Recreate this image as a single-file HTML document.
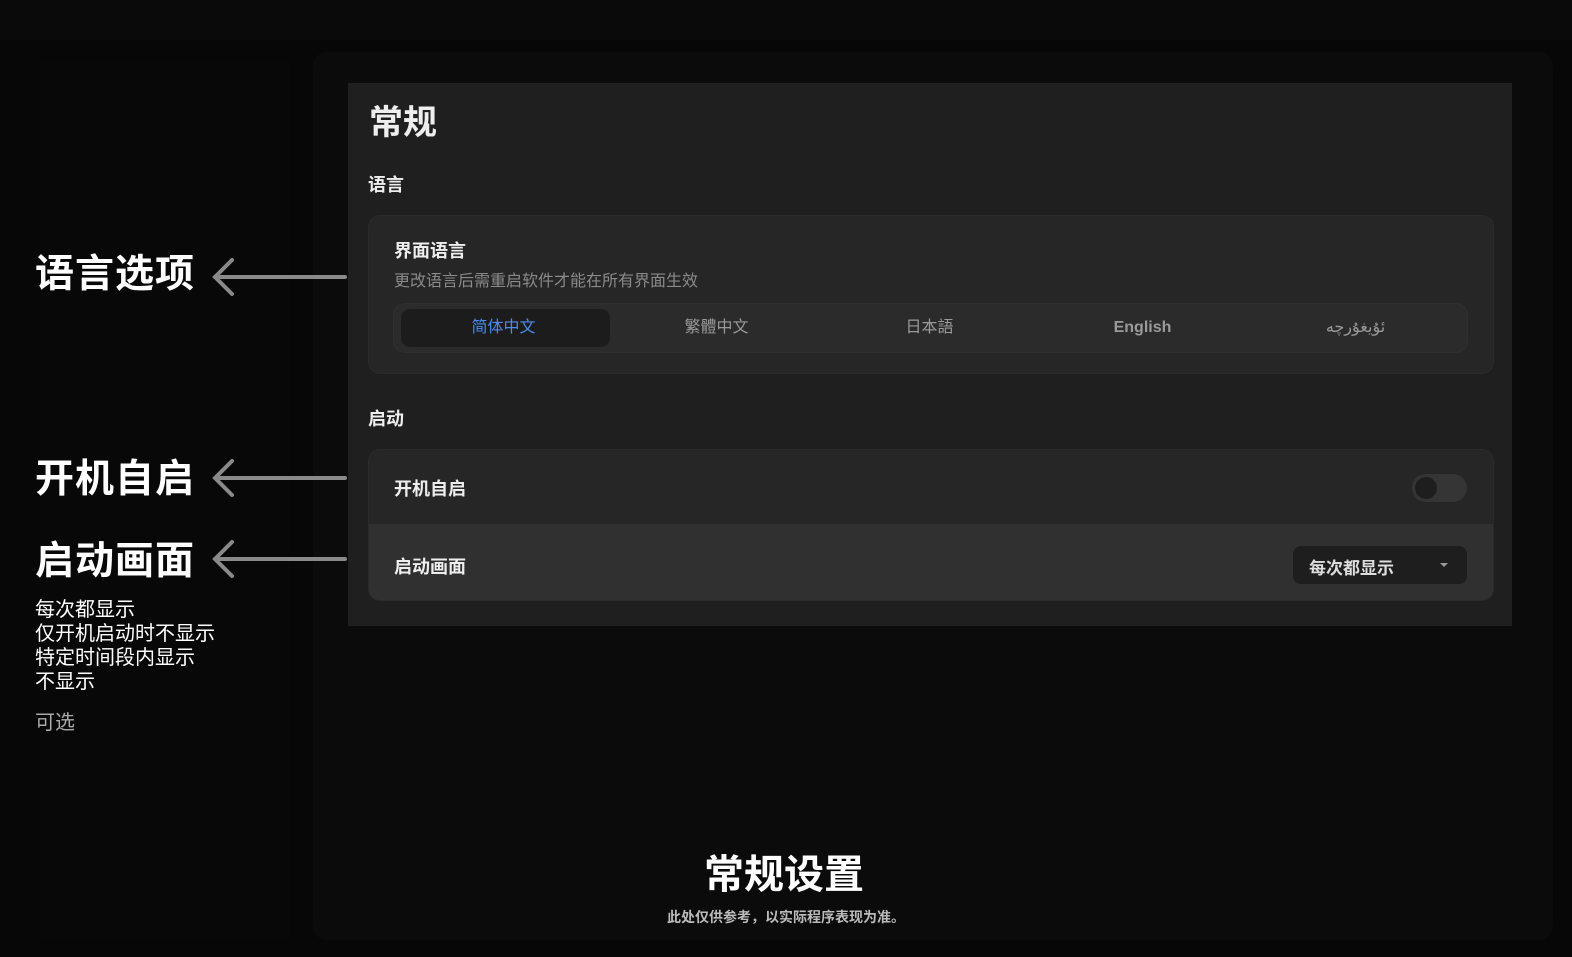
<!DOCTYPE html>
<html><head><meta charset="utf-8"><style>
*{margin:0;padding:0;box-sizing:border-box}
body{width:1572px;height:957px;background:#070707;font-family:"Liberation Sans","Noto Sans CJK SC",sans-serif;position:relative;overflow:hidden;color:#eee}
.abs{position:absolute}
.top{left:0;top:0;width:1572px;height:40px;background:#0a0a0a}
.side{left:40px;top:60px;width:250px;height:880px;background:#080808}
.outer{left:313px;top:52px;width:1240px;height:888px;background:#0b0b0b;border-radius:14px}
.panel{left:348px;top:83px;width:1164px;height:543px;background:#1f1f1f}
.card{background:#262626;border-radius:12px;border:1px solid #2a2a2a}
.ann{color:#fff;font-weight:bold;font-size:39px;left:35px;letter-spacing:1px}
.opts{left:35px;top:598px;font-size:20px;line-height:24px;color:#fff}
.seg{position:absolute;top:0;height:48px;line-height:48px;text-align:center;font-size:16px;color:#9a9a9a;width:213px}
</style></head><body>
<div class="abs top"></div>
<div class="abs side"></div>
<div class="abs outer"></div>
<div class="abs panel">
  <div class="abs" style="left:21px;top:12px;font-size:34px;font-weight:bold;color:#eee">常规</div>
  <div class="abs" style="left:20px;top:88px;font-size:18px;font-weight:bold;color:#eee">语言</div>
  <div class="abs card" style="left:20px;top:132px;width:1126px;height:159px">
    <div class="abs" style="left:25px;top:21px;font-size:18px;font-weight:bold;color:#eee">界面语言</div>
    <div class="abs" style="left:25px;top:51px;font-size:16px;color:#8a8a8a">更改语言后需重启软件才能在所有界面生效</div>
    <div class="abs" style="left:24px;top:87px;width:1075px;height:50px;background:#2b2b2b;border-radius:12px;border:1px solid #2f2f2f">
      <div class="abs" style="left:7px;top:5px;width:209px;height:38px;background:#1c1c1c;border-radius:9px"></div>
      <div class="seg" style="left:3px;color:#4a8cf0">简体中文</div>
      <div class="seg" style="left:216px">繁體中文</div>
      <div class="seg" style="left:429px">日本語</div>
      <div class="seg" style="left:642px;font-weight:bold">English</div>
      <div class="seg" style="left:855px">ئۇيغۇرچە</div>
    </div>
  </div>
  <div class="abs" style="left:20px;top:322px;font-size:18px;font-weight:bold;color:#eee">启动</div>
  <div class="abs card" style="left:20px;top:366px;width:1126px;height:152px;overflow:hidden">
    <div class="abs" style="left:25px;top:25px;font-size:18px;font-weight:bold;color:#eee">开机自启</div>
    <div class="abs" style="left:1043px;top:24px;width:55px;height:28px;background:#353535;border-radius:14px">
      <div class="abs" style="left:3px;top:3px;width:22px;height:22px;background:#1e1e1e;border-radius:50%"></div>
    </div>
    <div class="abs" style="left:0;top:74px;width:1126px;height:78px;background:#303030"></div>
    <div class="abs" style="left:25px;top:103px;font-size:18px;font-weight:bold;color:#eee">启动画面</div>
    <div class="abs" style="left:924px;top:96px;width:174px;height:38px;background:#1e1e1e;border-radius:8px">
      <div class="abs" style="left:16px;top:8px;font-size:17px;font-weight:bold;color:#ddd">每次都显示</div>
      <div class="abs" style="left:147px;top:17px;width:0;height:0;border-left:4px solid transparent;border-right:4px solid transparent;border-top:4px solid #999"></div>
    </div>
  </div>
</div>
<div class="abs ann" style="top:243px">语言选项</div>
<div class="abs ann" style="top:448px">开机自启</div>
<div class="abs ann" style="top:530px">启动画面</div>
<svg class="abs" style="left:205px;top:250px" width="145" height="330">
 <g stroke="#8a8a8a" stroke-width="4" fill="none" stroke-linecap="round">
  <path d="M10 27 H140 M27 10 L10 27 L27 44"/>
  <path d="M10 228 H140 M27 211 L10 228 L27 245"/>
  <path d="M10 309 H140 M27 292 L10 309 L27 326"/>
 </g>
</svg>
<div class="abs opts">每次都显示<br>仅开机启动时不显示<br>特定时间段内显示<br>不显示</div>
<div class="abs" style="left:35px;top:706px;font-size:20px;color:#aaa">可选</div>
<div class="abs" style="left:0;width:1572px;top:842px;text-align:center;font-size:40px;font-weight:bold;color:#fff"><span style="position:relative;left:-2px">常规设置</span></div>
<div class="abs" style="left:0;width:1572px;top:907px;text-align:center;font-size:14px;font-weight:bold;color:#bbb">此处仅供参考，以实际程序表现为准。</div>
</body></html>
